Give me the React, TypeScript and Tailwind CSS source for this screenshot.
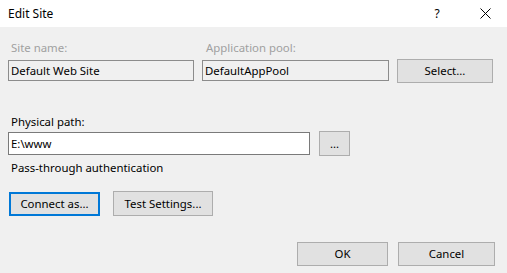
import React from 'react';

const font = { fontFamily: '"Segoe UI", "Noto Sans", "Liberation Sans", sans-serif' };

const Btn: React.FC<{ label: string; className?: string; focused?: boolean }> = ({ label, className = '', focused }) => (
  <button
    className={`flex items-center justify-center bg-[#e1e1e1] text-[11.4px] text-black ${
      focused ? 'border-2 border-[#0078d7]' : 'border border-[#adadad]'
    } ${className}`}
  >
    {label}
  </button>
);

export default function App() {
  return (
    <div style={font} className="w-[507px] h-[273px] flex flex-col bg-[#f0f0f0] text-[11.4px] leading-[16px] text-black overflow-hidden">
      {/* Title bar */}
      <div className="h-[27px] bg-white flex items-center pl-[8px]">
        <span className="flex-1 text-[12px]">Edit Site</span>
        <span className="w-[10px] mr-[38px] text-center text-[12px]">?</span>
        <svg width="11" height="11" viewBox="0 0 11 11" className="mr-[16px]">
          <path d="M0.5 0.5 L10.5 10.5 M10.5 0.5 L0.5 10.5" stroke="#000" strokeWidth="1" />
        </svg>
      </div>

      {/* Site name / pool */}
      <div className="flex items-end pl-[8px] pt-[13px]">
        <div className="w-[186px] flex flex-col">
          <span className="pl-[3px] text-[#a0a0a0]">Site name:</span>
          <div className="mt-[4px] h-[21px] border border-[#8c8c8c] flex items-center pl-[2px]">Default Web Site</div>
        </div>
        <div className="w-[187px] ml-[8px] flex flex-col">
          <span className="pl-[4px] text-[#a0a0a0]">Application pool:</span>
          <div className="mt-[4px] h-[21px] border border-[#8c8c8c] flex items-center pl-[2px]">DefaultAppPool</div>
        </div>
        <Btn label="Select..." className="ml-[8px] w-[96px] h-[24px] mb-[-2px]" />
      </div>

      {/* Physical path */}
      <div className="pl-[11px] mt-[33px]">Physical path:</div>
      <div className="flex items-center pl-[8px] mt-[1px]">
        <div className="w-[302px] h-[23px] bg-white border border-[#7a7a7a] flex items-center pl-[2px]">E:\www</div>
        <Btn label="..." className="ml-[9px] w-[31px] h-[25px]" />
      </div>
      <div className="pl-[11px] mt-[4px]">Pass-through authentication</div>

      {/* Connect / Test */}
      <div className="flex items-center pl-[9px] mt-[15px]">
        <Btn label="Connect as..." focused className="w-[91px] h-[24px]" />
        <Btn label="Test Settings..." className="ml-[13px] w-[100px] h-[25px]" />
      </div>

      {/* OK / Cancel */}
      <div className="flex justify-end pr-[12px] mt-[26px]">
        <Btn label="OK" className="w-[91px] h-[24px]" />
        <Btn label="Cancel" className="ml-[10px] w-[97px] h-[24px]" />
      </div>
    </div>
  );
}
